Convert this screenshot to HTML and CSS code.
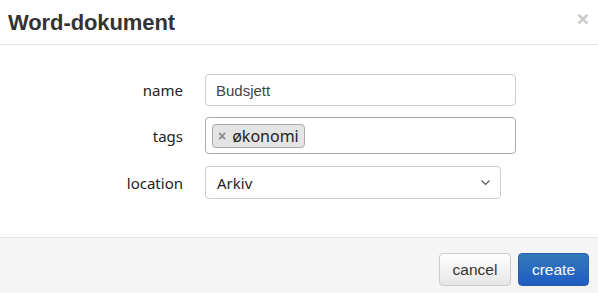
FILE: index.html
```html
<!DOCTYPE html>
<html>
<head>
<meta charset="utf-8">
<link rel="stylesheet" href="styles.css">
</head>
<body>
<div class="dialog">
  <div class="header">
    <h1 class="title">Word-dokument</h1>
    <span class="close">×</span>
  </div>
  <div class="content">
    <div class="form">
      <label class="label">name</label>
      <div class="field"><div class="input">Budsjett</div></div>
      <label class="label">tags</label>
      <div class="field"><div class="tags"><span class="chip"><span class="chip-x">×</span>økonomi</span></div></div>
      <label class="label">location</label>
      <div class="field"><div class="select"><span>Arkiv</span>
        <svg class="chev" width="11" height="7" viewBox="0 0 11 7"><path d="M1.5 1.5 L5.5 5.5 L9.5 1.5" fill="none" stroke="#555" stroke-width="1.2"/></svg>
      </div></div>
    </div>
  </div>
  <div class="footer">
    <button class="btn btn-default">cancel</button>
    <button class="btn btn-primary">create</button>
  </div>
</div>
</body>
</html>
```
FILE: styles.css
```css
html, body { margin: 0; padding: 0; background: #fff; }
.dialog { width: 598px; height: 293px; display: flex; flex-direction: column; font-family: "Liberation Sans", Arial, sans-serif; }
.header { height: 44px; border-bottom: 1px solid #e5e5e5; display: flex; align-items: center; justify-content: space-between; padding: 0 9px 0 8px; box-sizing: content-box; }
.title { margin: 0; font-size: 22px; font-weight: bold; color: #333; letter-spacing: -0.1px; padding-top: 1px; }
.close { font-size: 21px; font-weight: bold; color: #c8c8c8; line-height: 1; margin-top: -8px; }
.content { flex: 1; padding-top: 29px; }
.form { display: grid; grid-template-columns: 183px 311px; column-gap: 22px; row-gap: 12px; align-items: center; }
.label { text-align: right; font-family: "Noto Sans", sans-serif; font-size: 15px; color: #222; }
.input { height: 30px; border: 1px solid #ccc; border-radius: 4px; display: flex; align-items: center; padding-left: 10px; font-size: 15px; color: #444; }
.tags { height: 35px; border: 1px solid #aaa; border-radius: 4px; display: flex; align-items: center; padding-left: 6px; margin-top: -1px; }
.chip { display: inline-flex; align-items: center; height: 22px; padding: 0 5px 0 5px; background: #e4e4e4; border: 1px solid #aaa; border-radius: 4px; font-family: "Noto Sans", sans-serif; font-size: 16px; color: #222; }
.chip-x { color: #888; font-weight: bold; font-size: 14px; margin-right: 6px; font-family: "Liberation Sans", sans-serif; }
.select { width: 296px; border: 1px solid #ccc; border-radius: 4px; display: flex; align-items: center; justify-content: space-between; padding: 0 9px 0 11px; box-sizing: border-box; height: 33px; font-family: "Noto Sans", sans-serif; font-size: 15px; color: #222; }
.footer { height: 56px; border-top: 1px solid #e5e5e5; background: #f5f5f5; display: flex; justify-content: flex-end; align-items: flex-start; padding: 15px 9px 0 0; box-sizing: border-box; gap: 7px; }
.btn { height: 33px; padding: 0 10px; border-radius: 4px; font-family: "Liberation Sans", Arial, sans-serif; font-size: 15.5px; cursor: pointer; }
.btn-default { width: 72px; background: linear-gradient(#fff, #e6e6e6); border: 1px solid #ccc; color: #333; }
.btn-primary { width: 71px; background: linear-gradient(#337ab7, #1f5cc4); border: 1px solid #2a5fb0; color: #fff; }
```
